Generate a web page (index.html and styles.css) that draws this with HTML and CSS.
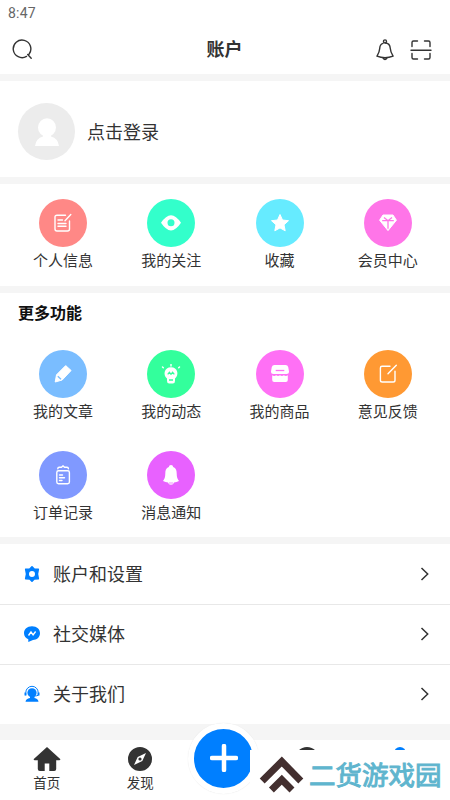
FILE: index.html
```html
<!DOCTYPE html>
<html lang="zh-CN">
<head>
<meta charset="utf-8">
<meta name="viewport" content="width=device-width, initial-scale=1">
<title>账户</title>
<link rel="stylesheet" href="styles.css">
</head>
<body>
<div class="app">
  <div class="status">8:47</div>
  <header class="header">
    <svg class="icon" width="22" height="22" viewBox="0 0 22 22"><path d="M14.5 17.4A8.8 8.8 0 1 1 17 15.2M15.7 15.5 19.2 19.2"/></svg>
    <h1 class="title">账户</h1>
    <div class="actions">
      <svg class="icon" width="20" height="22" viewBox="0 0 20 22"><circle cx="10" cy="2.4" r="1.5"/><path d="M8 4.3C5.6 5 4.8 7 4.7 9.5 4.5 13 3.5 14.5 1.9 17.2 7 19.1 13 19.1 18.1 17.2 16.4 14.5 15.5 13 15.3 9.5 15.1 6.5 13.5 4 10.2 4M8 19.2Q10 22 12 19.2"/></svg>
      <svg class="icon" width="22" height="22" viewBox="0 0 22 22"><path d="M2 7.5V3.5Q2 2 3.5 2H7.5M14.5 2H18.5Q20 2 20 3.5V7.5M2 14.5V18.5Q2 20 3.5 20H7.5M14.5 20H18.5Q20 20 20 18.5V14.5M1 11.2H21"/></svg>
    </div>
  </header>

  <section class="profile">
    <div class="avatar">
      <svg width="26" height="28" viewBox="0 0 26 28"><ellipse cx="13" cy="9.5" rx="9" ry="9.3"/><path d="M9 16H17V18.5Q24 20 25 28H1Q2 20 9 18.5Z"/></svg>
    </div>
    <span>点击登录</span>
  </section>

  <section class="grid grid-main">
    <div class="item"><div class="disc coral"><svg class="line" width="20" height="20" viewBox="0 0 20 20"><path d="M12.5 2.2H4Q2 2.2 2 4V16Q2 18 4 18H14.5Q16.5 18 16.5 16V8M12 7.8 17.8 1.6M5 7H9.5M5 10.5H13M5 13.3H13"/></svg></div><span>个人信息</span></div>
    <div class="item"><div class="disc mint"><svg width="20" height="20" viewBox="0 0 20 20"><path class="solid" fill-rule="evenodd" d="M0 9.8Q10-5.5 20 9.8 10 25 0 9.8ZM10 6.2A3.5 3.5 0 1 0 10 13.2 3.5 3.5 0 1 0 10 6.2Z"/></svg></div><span>我的关注</span></div>
    <div class="item"><div class="disc cyan"><svg width="20" height="20" viewBox="0 0 20 20"><path class="solid join" d="M10 1.5 12.5 7 18.5 7.7 14 11.8 15.2 17.8 10 14.9 4.8 17.8 6 11.8 1.5 7.7 7.5 7Z"/></svg></div><span>收藏</span></div>
    <div class="item"><div class="disc pink"><svg width="20" height="20" viewBox="0 0 20 20"><path class="solid join" d="M5 2H15L18.4 7.2 10 17.6 1.6 7.2Z"/><path class="cut" d="M4.2 7.7H15.8M6 4.4 10 7.7 14 4.4M10 7.7V15.8"/></svg></div><span>会员中心</span></div>
  </section>

  <section class="more">
    <h2>更多功能</h2>
    <div class="grid">
      <div class="item"><div class="disc sky"><svg width="20" height="20" viewBox="0 0 20 20"><path class="solid join" d="M12.7 1.6 18.1 6.5 9.2 16 2.2 18 3.5 10.8Z"/><path class="cut" d="M4.8 12.2 8 15.2"/></svg></div><span>我的文章</span></div>
      <div class="item"><div class="disc green"><svg width="20" height="20" viewBox="0 0 20 20"><path class="solid" d="M6 17V14.5C1.5 10.7 3.4 3.2 10 3.2S18.5 10.7 14 14.5V17Q14 19.5 11.8 19.5H8.2Q6 19.5 6 17Z"/><path class="line" d="M10 0V2M1.5 3 2.3 3.8M18.5 3 17.7 3.8"/><path class="cut" d="M6.7 10.3 8.4 8.3 10 10.3 11.6 8.3 13.3 10.3M8 16H12"/></svg></div><span>我的动态</span></div>
      <div class="item"><div class="disc magenta"><svg width="20" height="20" viewBox="0 0 20 20"><path class="solid" d="M4.5 1H15.5Q17.7 1 18.2 3L19 7.5Q19 10 16.5 10H3.5Q1 10 1 7.5L1.8 3Q2.3 1 4.5 1ZM2.2 11.2Q4 12.7 6.2 11.2 8 12.7 10 11.2 12 12.7 13.8 11.2 16 12.7 17.8 11.2V16Q17.8 18 15.8 18H4.2Q2.2 18 2.2 16Z"/><path class="cut" d="M5.7 6.5H14.3"/></svg></div><span>我的商品</span></div>
      <div class="item"><div class="disc orange"><svg class="line" width="20" height="20" viewBox="0 0 20 20"><path d="M12 2.3H4Q2.4 2.3 2.4 4V16.2Q2.4 18 4.2 18H15.2Q17 18 17 16.2V7.3M10 9.8 18.3 1.3"/></svg></div><span>意见反馈</span></div>
      <div class="item"><div class="disc indigo"><svg class="line" width="20" height="20" viewBox="0 0 20 20"><rect x="3.8" y="5.8" width="12.6" height="13" rx="1.7"/><path d="M4.8 3.8Q4.8 2.2 6.2 2.2H8.5L10 .9 11.5 2.2H14Q15.4 2.2 15.4 3.8M6.5 10H9.5M6.5 12.8H11.5M6.5 15.5H9"/></svg></div><span>订单记录</span></div>
      <div class="item"><div class="disc violet"><svg width="20" height="20" viewBox="0 0 20 20"><path class="solid" d="M10 0Q12 0 12.2 2C15 3 15.7 5.5 15.7 8.5 15.7 12.2 16.5 14 18 16Q15.5 17.4 13 17.5 12.5 19.8 10 19.8T7 17.5Q4.5 17.4 2 16C3.5 14 4.3 12.2 4.3 8.5 4.3 5.5 5 3 7.8 2Q8 0 10 0Z"/><path class="cut thin" d="M8 18H12"/></svg></div><span>消息通知</span></div>
    </div>
  </section>

  <section class="list">
    <div class="row">
      <svg class="lead" width="18" height="18" viewBox="0 0 18 18"><path class="gear" fill-rule="evenodd" d="M9 1.8 11.2 4 15.3 4.3 14.4 9 15.3 13.7 11.2 14 9 16.2 6.8 14 2.7 13.7 3.6 9 2.7 4.3 6.8 4ZM9 5.2A3.8 3.8 0 1 0 9 12.8 3.8 3.8 0 1 0 9 5.2Z"/></svg>
      <span>账户和设置</span>
      <svg class="chev" width="10" height="14" viewBox="0 0 10 14"><path d="M1.5 1 7.7 7 1.5 13"/></svg>
    </div>
    <div class="row">
      <svg class="lead" width="18" height="18" viewBox="0 0 18 18"><path d="M9 1.2C14 1.2 17 4.2 17 8.3S13.5 15 10 15L5.3 17V14.2C2.8 13.2 1 11.3 1 8.3 1 4.2 4 1.2 9 1.2Z"/><path class="spark" d="M5.5 10.5 8 7 10.1 9.8 12.6 6.5"/></svg>
      <span>社交媒体</span>
      <svg class="chev" width="10" height="14" viewBox="0 0 10 14"><path d="M1.5 1 7.7 7 1.5 13"/></svg>
    </div>
    <div class="row">
      <svg class="lead" width="18" height="18" viewBox="0 0 18 18"><circle cx="9" cy="7.8" r="4.6"/><path d="M7 11H11.5V13Q15 13.5 15.5 16.7H2.5Q3 13.5 7 13Z"/><path class="ring" d="M2.8 10.3V7.5A6.2 6.2 0 0 1 15.2 7.5V10.3Q13.7 11 11 11"/><path class="ring wide" d="M2.4 7.5V10.5M15.6 7.5V10.5"/></svg>
      <span>关于我们</span>
      <svg class="chev" width="10" height="14" viewBox="0 0 10 14"><path d="M1.5 1 7.7 7 1.5 13"/></svg>
    </div>
  </section>

  <nav class="tabs">
    <div class="tab"><svg width="28" height="24" viewBox="0 0 28 24"><path d="M14 0 27.2 12Q27.7 13.2 26.2 13.3H23.2V22Q23.2 24 21.2 24H16.3V16.5H11.7V24H6.8Q4.8 24 4.8 22V13.3H1.8Q.3 13.2.8 12Z"/></svg><span>首页</span></div>
    <div class="tab"><svg width="24" height="24" viewBox="0 0 24 24"><path fill-rule="evenodd" d="M12 0A12 12 0 1 0 12 24 12 12 0 1 0 12 0ZM18 6 14.3 14 6 18 9.7 10Z"/><circle cx="12" cy="12" r="1.6"/></svg><span>发现</span></div>
    <div class="gap"><div class="fab"><svg width="28" height="28" viewBox="0 0 28 28"><path d="M14 2V26M2 14H26"/></svg></div></div>
    <div class="tab"><svg width="24" height="24" viewBox="0 0 24 24"><circle cx="12" cy="12" r="12"/></svg></div>
    <div class="tab active"><svg width="24" height="24" viewBox="0 0 24 24"><circle cx="12" cy="6" r="6"/><path d="M1 24Q2 13 12 13T23 24Z"/></svg></div>
    <div class="brand">
      <svg width="46" height="38" viewBox="0 0 46 38"><path d="M3.2 25 22.8 5.5 41.8 25M12.4 34 22.8 23.8 33 34"/></svg>
      <span>二货游戏园</span>
    </div>
  </nav>
</div>
</body>
</html>
```

FILE: styles.css
```css
* { box-sizing: border-box; }

body {
  margin: 0;
  background: #f5f5f5;
  color: #333;
  font-family: "Noto Sans CJK SC", sans-serif;
}

svg { display: block; flex: none; }
h1, h2 { margin: 0; }

.app {
  width: 450px;
  height: 800px;
  overflow: hidden;
  display: flex;
  flex-direction: column;
  gap: 7px;
}

.status {
  height: 26px;
  padding-left: 8px;
  margin-bottom: -7px;
  background: #fff;
  color: #666;
  font: 14px/26px Roboto, sans-serif;
  letter-spacing: .2px;
}

.header {
  height: 48px;
  padding: 0 18px 0 12px;
  background: #fff;
  display: grid;
  grid-template-columns: 1fr auto 1fr;
  align-items: center;
}

.title {
  margin-left: 5px;
  padding-bottom: 5px;
  font-size: 18px;
  line-height: 42px;
  font-weight: 700;
}
.actions { display: flex; justify-content: flex-end; gap: 15px; }
.icon { fill: none; stroke: #333; stroke-width: 1.4; stroke-linecap: round; stroke-linejoin: round; }

.profile {
  height: 96px;
  padding: 5px 18px 0;
  background: #fff;
  display: flex;
  align-items: center;
  gap: 12px;
  font-size: 18px;
}
.profile span { padding-bottom: 2px; }

.avatar {
  width: 57px;
  height: 57px;
  border-radius: 50%;
  background: #ececec;
  display: grid;
  place-items: center;
}
.avatar svg { fill: #fff; }

.grid {
  padding: 0 8px 0 9px;
  background: #fff;
  display: grid;
  grid-template-columns: repeat(4, 1fr);
  grid-auto-rows: 101.5px;
}
.grid-main { height: 102px; padding-top: 15px; }

.item {
  display: flex;
  flex-direction: column;
  align-items: center;
  font-size: 15px;
  line-height: 26.6px;
}

.disc {
  width: 48px;
  height: 48px;
  border-radius: 50%;
  background: var(--tone);
  display: grid;
  place-items: center;
}
.coral { --tone: #ff8886; }
.mint { --tone: #33ffcb; }
.cyan { --tone: #66ebff; }
.pink { --tone: #ff75e8; }
.sky { --tone: #7abdff; }
.green { --tone: #33ff9c; }
.magenta { --tone: #ff70f5; }
.orange { --tone: #ff9933; }
.indigo { --tone: #8099ff; }
.violet { --tone: #e861ff; }

.solid { fill: #fff; }
.join { stroke: #fff; stroke-width: 1; stroke-linejoin: round; }
.line { fill: none; stroke: #fff; stroke-width: 1.4; stroke-linecap: round; stroke-linejoin: round; }
.cut { fill: none; stroke: var(--tone); stroke-width: 1.3; }
.thin { stroke-width: .7; }

.more { height: 244px; overflow: hidden; background: #fff; }
.more h2 {
  height: 56.5px;
  padding-left: 18px;
  color: #111;
  font-size: 16px;
  line-height: 39px;
}

.list { height: 180px; background: #fff; }
.row {
  height: 60px;
  padding: 0 20px 0 23px;
  display: flex;
  align-items: center;
  font-size: 18px;
}
.row + .row { border-top: 1px solid #e8e8e8; }
.row span { flex: 1; margin-left: 12px; padding-bottom: 2px; }
.row + .row span { padding-bottom: 3px; }
.row + .row svg { margin-bottom: 1px; }
.lead { fill: #007fff; }
.gear { stroke: #007fff; stroke-width: 1.6; stroke-linejoin: round; }
.spark { fill: none; stroke: #fff; stroke-width: 1.4; }
.ring { fill: none; stroke: #007fff; stroke-width: 1; }
.wide { stroke-width: 1.8; }
.chev { fill: none; stroke: #333; stroke-width: 1.5; }

.tabs {
  position: relative;
  height: 60px;
  margin-top: 9px;
  background: #fff;
  display: flex;
}
.tab {
  width: 93.5px;
  padding-top: 7px;
  display: flex;
  flex-direction: column;
  align-items: center;
  font-size: 13.5px;
  line-height: 22px;
}
.tab svg { fill: #333; }
.active svg { fill: #007fff; }
.gap { width: 73px; display: flex; justify-content: center; }
.fab {
  flex: none;
  width: 71px;
  height: 71px;
  margin-top: -17.5px;
  border: 6px solid #fff;
  border-radius: 50%;
  background: #007fff;
  box-shadow: 0 0 1px #ddd;
  display: grid;
  place-items: center;
}
.fab svg { fill: none; stroke: #fff; stroke-width: 4.5; stroke-linecap: round; }

.brand {
  position: absolute;
  left: 250px;
  top: 10px;
  width: 200px;
  height: 50px;
  padding-left: 9px;
  background: #fff;
  display: flex;
  align-items: center;
  gap: 4px;
  color: #5fb5ce;
  font-size: 26.5px;
  font-weight: 400;
  white-space: nowrap;
}
.brand span { padding-bottom: 4px; -webkit-text-stroke: 1px #5fb5ce; }
.brand svg { fill: none; stroke: #432f2f; stroke-width: 7; }
```
